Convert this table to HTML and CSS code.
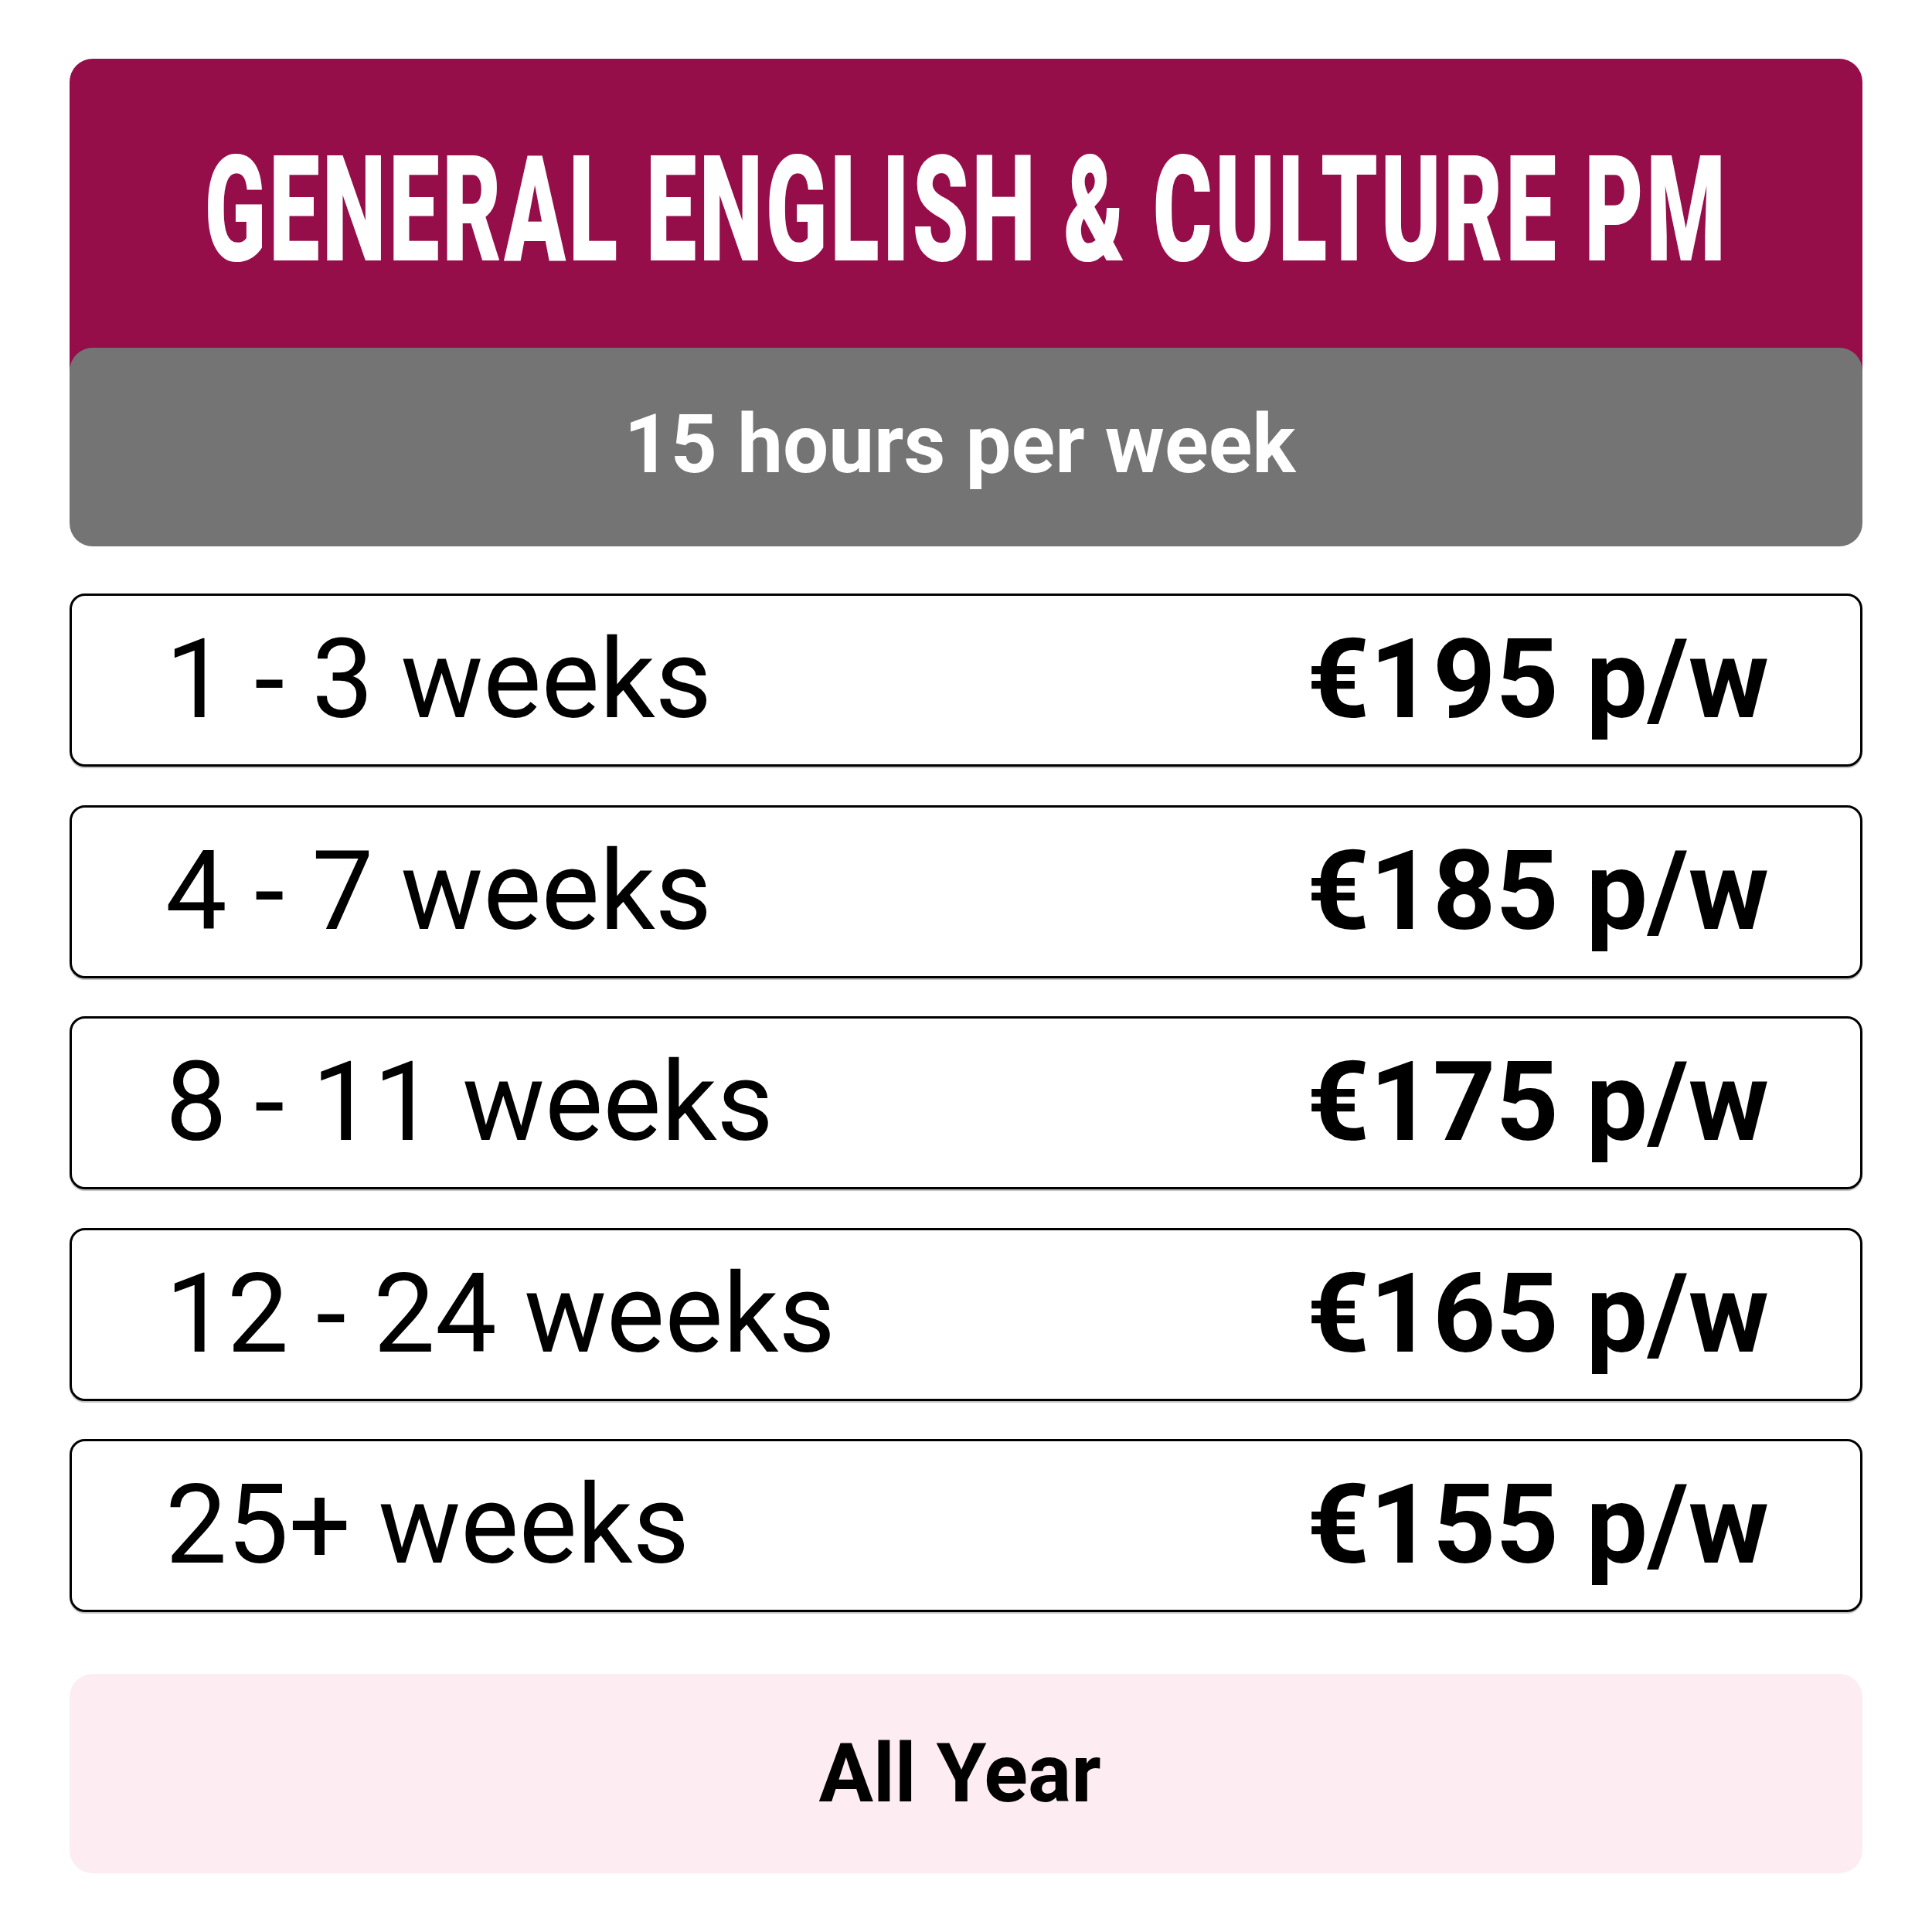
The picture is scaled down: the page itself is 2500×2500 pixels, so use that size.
FILE: index.html
```html
<!DOCTYPE html>
<html lang="en">
<head>
<meta charset="utf-8">
<title>General English &amp; Culture PM</title>
<link rel="stylesheet" href="styles.css">
</head>
<body>
<main class="page">
  <section class="card-head">
    <div class="title-area">
      <h1 class="title"><span class="title-text">GENERAL ENGLISH &amp; CULTURE PM</span></h1>
    </div>
    <div class="hours">15 hours per week</div>
  </section>
  <ul class="rows">
    <li class="row"><span class="weeks">1 - 3 weeks</span><span class="price">€195 p/w</span></li>
    <li class="row"><span class="weeks">4 - 7 weeks</span><span class="price">€185 p/w</span></li>
    <li class="row"><span class="weeks">8 - 11 weeks</span><span class="price">€175 p/w</span></li>
    <li class="row"><span class="weeks">12 - 24 weeks</span><span class="price">€165 p/w</span></li>
    <li class="row"><span class="weeks">25+ weeks</span><span class="price">€155 p/w</span></li>
  </ul>
  <div class="season">All Year</div>
</main>
</body>
</html>
```

FILE: styles.css
```css
html, body {
  margin: 0;
  padding: 0;
  background: #ffffff;
}

.page {
  width: 2320px;
  padding: 76px 0 0 90px;
  font-family: Roboto, "Liberation Sans", Arial, sans-serif;
  display: flex;
  flex-direction: column;
}

.card-head {
  border-radius: 30px;
  background: linear-gradient(#950e4a 0 420px, transparent 420px);
  display: flex;
  flex-direction: column;
}

.title-area {
  height: 374px;
  display: flex;
  align-items: center;
  justify-content: center;
  overflow: hidden;
}

.title {
  margin: 0;
  color: #ffffff;
  font-size: 192px;
  font-weight: 900;
  line-height: 1;
  white-space: nowrap;
  padding-top: 18px;
}

.title-text {
  display: inline-block;
  transform: scaleX(0.61);
  letter-spacing: 6px;
}

.hours {
  height: 257px;
  background: #747474;
  border-radius: 30px;
  color: #ffffff;
  font-size: 105px;
  font-weight: 700;
  display: flex;
  align-items: center;
  justify-content: center;
  padding: 0 16px 6px 0;
  box-sizing: border-box;
}

.rows {
  list-style: none;
  margin: 61px 0 0 0;
  padding: 0;
  display: flex;
  flex-direction: column;
  gap: 49.5px;
}

.row {
  height: 224px;
  box-sizing: border-box;
  border: 3px solid #000000;
  border-radius: 20px;
  box-shadow: 0 2px 1px rgba(0, 0, 0, 0.25);
  display: flex;
  align-items: center;
  justify-content: space-between;
  padding: 0 118px 0 121px;
  font-size: 142px;
  line-height: 1;
  color: #000000;
}

.weeks {
  font-weight: 400;
}

.price {
  font-weight: 700;
}

.season {
  margin-top: 80px;
  height: 258px;
  background: #fdedf2;
  border-radius: 30px;
  font-size: 105px;
  font-weight: 700;
  color: #000000;
  display: flex;
  align-items: center;
  justify-content: center;
  padding-right: 16px;
}
```
